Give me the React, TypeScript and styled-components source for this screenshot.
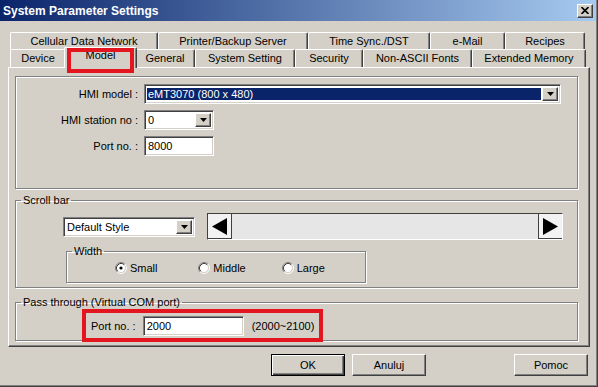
import React from 'react';
import styled, { createGlobalStyle, css } from 'styled-components';

const GlobalStyle = createGlobalStyle`
  html, body { margin: 0; padding: 0; background: #d4d0c8; }
  body {
    font-family: 'Liberation Sans', Arial, sans-serif;
    font-size: 11px;
    color: #000;
  }
  *, *::before, *::after { box-sizing: border-box; }
`;

const FACE = '#d4d0c8';
const RED = '#e3161f';

const raised = css`
  border: 1px solid;
  border-color: #fff #404040 #404040 #fff;
  box-shadow: inset -1px -1px 0 #808080;
  background: ${FACE};
`;

const sunken = css`
  border: 1px solid;
  border-color: #808080 #fff #fff #808080;
  box-shadow: inset 1px 1px 0 #404040, inset -1px -1px 0 ${FACE};
`;

const etched = css`
  border: 1px solid #808080;
  box-shadow: inset 1px 1px 0 #fff, 1px 1px 0 #fff;
`;

const Window = styled.div`
  width: 598px;
  height: 387px;
  background: ${FACE};
  display: flex;
  flex-direction: column;
  border-right: 1px solid #404040;
  border-bottom: 1px solid #404040;
  box-shadow: inset -1px -1px 0 #808080;
`;

const TitleBar = styled.div`
  height: 21px;
  margin-right: 1px;
  padding: 0 3px;
  display: flex;
  align-items: center;
  justify-content: space-between;
  background: linear-gradient(to right, #0a246a, #a6caf0);
`;

const Title = styled.span`
  color: #fff;
  font-weight: bold;
  font-size: 12px;
`;

const CloseButton = styled.div`
  ${raised};
  width: 16px;
  height: 14px;
  display: flex;
  align-items: center;
  justify-content: center;
`;

const Body = styled.div`
  padding: 11px 7px 0 8px;
  display: flex;
  flex-direction: column;
`;

const TabStrip = styled.div`
  padding-left: 2px;
  display: flex;
  flex-direction: column;
`;

const TabRow = styled.div<{ $h: number }>`
  display: flex;
  align-items: flex-end;
  height: ${({ $h }) => $h}px;
`;

const Tab = styled.div<{ $w: number; $active?: boolean }>`
  width: ${({ $w }) => $w}px;
  height: 100%;
  flex-shrink: 0;
  background: ${FACE};
  border-top: 1px solid #fff;
  border-left: 1px solid #fff;
  border-right: 1px solid #404040;
  border-radius: 2px 2px 0 0;
  box-shadow: inset -1px 0 0 #808080;
  text-align: center;
  padding-top: 2px;
  white-space: nowrap;
  ${({ $active, $w }) =>
    $active &&
    css`
      position: relative;
      z-index: 2;
      width: ${$w + 4}px;
      height: 21px;
      margin: 0 -2px -1px;
      padding-top: 1px;
      &::after {
        content: '';
        position: absolute;
        left: 2px;
        top: 0;
        width: 67px;
        height: 25px;
        border: 4px solid ${RED};
      }
    `}
`;

const Panel = styled.div`
  height: 280px;
  border-top: 1px solid #fff;
  border-left: 1px solid #fff;
  border-right: 1px solid #404040;
  border-bottom: 1px solid #404040;
  box-shadow: inset -1px -1px 0 #808080;
  padding: 8px 11px 0 6px;
  display: flex;
  flex-direction: column;
`;

const PlainGroup = styled.div`
  ${etched};
  height: 113px;
  padding: 7px 0 0 0;
  display: grid;
  grid-template-columns: 122px auto;
  column-gap: 6px;
  row-gap: 6px;
  align-content: start;
  align-items: center;
`;

const FieldLabel = styled.span`
  text-align: right;
  white-space: nowrap;
`;

const Group = styled.fieldset<{ $mt?: number; $pad: string }>`
  ${etched};
  margin: ${({ $mt }) => $mt ?? 0}px 0 0 0;
  padding: ${({ $pad }) => $pad};
  min-width: 0;
`;

const WidthGroup = styled(Group)`
  margin-left: 50px;
  width: 300px;
`;

const Legend = styled.legend`
  margin-left: 5px;
  padding: 0 2px;
  line-height: 13px;
`;

const Combo = styled.div<{ $w: number }>`
  ${sunken};
  width: ${({ $w }) => $w}px;
  height: 20px;
  background: #fff;
  display: flex;
  align-items: stretch;
  padding: 2px;
`;

const ComboValue = styled.div<{ $selected?: boolean }>`
  flex: 1;
  display: flex;
  align-items: center;
  padding-left: 1px;
  margin: ${({ $selected }) => ($selected ? '1px 1px 1px 0' : '0')};
  white-space: nowrap;
  overflow: hidden;
  background: ${({ $selected }) => ($selected ? '#0a246a' : '#fff')};
  color: ${({ $selected }) => ($selected ? '#fff' : '#000')};
`;

const DropButton = styled.div`
  ${raised};
  width: 16px;
  display: flex;
  align-items: center;
  justify-content: center;
`;

const TextBox = styled.div<{ $w: number }>`
  ${sunken};
  width: ${({ $w }) => $w}px;
  height: 20px;
  background: #fff;
  padding: 0 3px;
  display: flex;
  align-items: center;
`;

const ScrollRow = styled.div`
  display: flex;
  align-items: center;
  gap: 12px;
  padding-left: 47px;
`;

const ScrollPreview = styled.div`
  width: 356px;
  height: 27px;
  border: 1px solid;
  border-color: #404040 #fff #fff #404040;
  background: #e6e6e6;
  display: flex;
  justify-content: space-between;
`;

const ArrowButton = styled.div<{ $side: 'left' | 'right' }>`
  width: 24px;
  background: #f2f2f2;
  display: flex;
  align-items: center;
  justify-content: center;
  border-${({ $side }) => ($side === 'left' ? 'right' : 'left')}: 1px solid #404040;
  border-bottom: 1px solid #404040;
`;

const RadioRow = styled.div`
  display: flex;
  padding-left: 48px;
`;

const RadioItem = styled.label`
  width: 87px;
  display: flex;
  align-items: center;
  gap: 3px;
`;

const Highlight = styled.div`
  margin: 0 0 -2px 66px;
  width: 241px;
  height: 33px;
  border: 4px solid ${RED};
  padding: 0 0 0 5px;
  display: flex;
  align-items: center;
  gap: 7px;
  position: relative;
`;

const Range = styled.span`
  margin-left: 1px;
`;

const ButtonRow = styled.div`
  margin-top: 7px;
  padding-right: 2px;
  display: flex;
  justify-content: flex-end;
  gap: 7px;
`;

const Button = styled.div<{ $default?: boolean; $ml?: number }>`
  width: 74px;
  height: 22px;
  display: flex;
  align-items: center;
  justify-content: center;
  margin-left: ${({ $ml }) => $ml ?? 0}px;
  ${({ $default }) =>
    $default
      ? css`
          border: 1px solid #000;
          background: ${FACE};
          box-shadow: inset 1px 1px 0 #fff, inset -1px -1px 0 #404040, inset -2px -2px 0 #808080;
        `
      : raised}
`;

const DownArrow = () => (
  <svg width="7" height="4" viewBox="0 0 7 4">
    <polygon points="0,0 7,0 3.5,4" fill="#000" />
  </svg>
);

const BigArrow = ({ dir }: { dir: 'left' | 'right' }) => (
  <svg width="15" height="17" viewBox="0 0 15 17">
    <polygon points={dir === 'left' ? '15,0 15,17 0,8.5' : '0,0 0,17 15,8.5'} fill="#000" />
  </svg>
);

const Radio = ({ checked }: { checked?: boolean }) => (
  <svg width="12" height="12" viewBox="0 0 12 12">
    <circle cx="6" cy="6" r="4.2" fill="#fff" />
    <path d="M2.11 9.89 A5.5 5.5 0 0 1 9.89 2.11" stroke="#808080" fill="none" />
    <path d="M9.89 2.11 A5.5 5.5 0 0 1 2.11 9.89" stroke="#fff" fill="none" />
    <path d="M2.82 9.18 A4.5 4.5 0 0 1 9.18 2.82" stroke="#404040" fill="none" />
    <path d="M9.18 2.82 A4.5 4.5 0 0 1 2.82 9.18" stroke={FACE} fill="none" />
    {checked && <circle cx="6" cy="6" r="1.6" fill="#000" />}
  </svg>
);

const topTabs = [
  { label: 'Cellular Data Network', w: 148 },
  { label: 'Printer/Backup Server', w: 150 },
  { label: 'Time Sync./DST', w: 122 },
  { label: 'e-Mail', w: 75 },
  { label: 'Recipes', w: 80 },
];

const bottomTabs = [
  { label: 'Device', w: 56 },
  { label: 'Model', w: 69, active: true },
  { label: 'General', w: 60 },
  { label: 'System Setting', w: 100 },
  { label: 'Security', w: 68 },
  { label: 'Non-ASCII Fonts', w: 109 },
  { label: 'Extended Memory', w: 114 },
];

export default function App() {
  return (
    <>
      <GlobalStyle />
      <Window>
        <TitleBar>
          <Title>System Parameter Settings</Title>
          <CloseButton>
            <svg width="8" height="7" viewBox="0 0 8 7">
              <path d="M0.5 0 L7.5 7 M7.5 0 L0.5 7" stroke="#000" strokeWidth="1.6" />
            </svg>
          </CloseButton>
        </TitleBar>
        <Body>
          <TabStrip>
            <TabRow $h={17}>
              {topTabs.map((t) => (
                <Tab key={t.label} $w={t.w}>
                  {t.label}
                </Tab>
              ))}
            </TabRow>
            <TabRow $h={18}>
              {bottomTabs.map((t) => (
                <Tab key={t.label} $w={t.w} $active={t.active}>
                  {t.label}
                </Tab>
              ))}
            </TabRow>
          </TabStrip>
          <Panel>
            <PlainGroup>
              <FieldLabel>HMI model :</FieldLabel>
              <Combo $w={417}>
                <ComboValue $selected>eMT3070 (800 x 480)</ComboValue>
                <DropButton>
                  <DownArrow />
                </DropButton>
              </Combo>
              <FieldLabel>HMI station no :</FieldLabel>
              <Combo $w={70}>
                <ComboValue>0</ComboValue>
                <DropButton>
                  <DownArrow />
                </DropButton>
              </Combo>
              <FieldLabel>Port no. :</FieldLabel>
              <TextBox $w={70}>8000</TextBox>
            </PlainGroup>

            <Group $mt={5} $pad="6px 0 4px 0">
              <Legend>Scroll bar</Legend>
              <ScrollRow>
                <Combo $w={132}>
                  <ComboValue>Default Style</ComboValue>
                  <DropButton>
                    <DownArrow />
                  </DropButton>
                </Combo>
                <ScrollPreview>
                  <ArrowButton $side="left">
                    <BigArrow dir="left" />
                  </ArrowButton>
                  <ArrowButton $side="right">
                    <BigArrow dir="right" />
                  </ArrowButton>
                </ScrollPreview>
              </ScrollRow>
              <WidthGroup $mt={5} $pad="4px 0 8px 0">
                <Legend>Width</Legend>
                <RadioRow>
                  <RadioItem>
                    <Radio checked />
                    Small
                  </RadioItem>
                  <RadioItem>
                    <Radio />
                    Middle
                  </RadioItem>
                  <RadioItem>
                    <Radio />
                    Large
                  </RadioItem>
                </RadioRow>
              </WidthGroup>
            </Group>

            <Group $mt={8} $pad="0 0 0 0">
              <Legend>Pass through (Virtual COM port)</Legend>
              <Highlight>
                <span>Port no. :</span>
                <TextBox $w={101}>2000</TextBox>
                <Range>(2000~2100)</Range>
              </Highlight>
            </Group>
          </Panel>
          <ButtonRow>
            <Button $default>OK</Button>
            <Button>Anuluj</Button>
            <Button $ml={81}>Pomoc</Button>
          </ButtonRow>
        </Body>
      </Window>
    </>
  );
}
